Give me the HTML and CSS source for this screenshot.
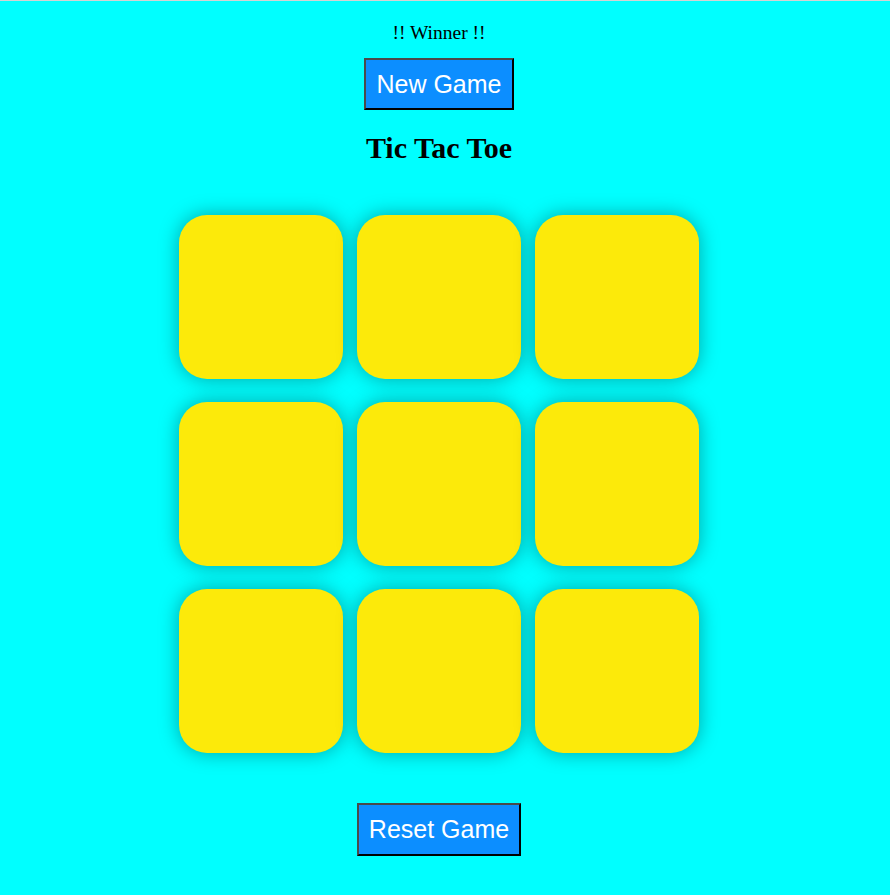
FILE: index.html
```html
<!DOCTYPE html>
<html lang="en">
<head>
<meta charset="utf-8">
<title>Tic Tac Toe</title>
<link rel="stylesheet" href="styles.css">
</head>
<body>
<main class="page">
  <div class="msg-container">
    <p class="msg">!! Winner !!</p>
    <button class="btn new-btn">New Game</button>
  </div>
  <h1 class="title">Tic Tac Toe</h1>
  <div class="board">
    <button class="box"></button>
    <button class="box"></button>
    <button class="box"></button>
    <button class="box"></button>
    <button class="box"></button>
    <button class="box"></button>
    <button class="box"></button>
    <button class="box"></button>
    <button class="box"></button>
  </div>
  <button class="btn reset-btn">Reset Game</button>
</main>
</body>
</html>
```

FILE: styles.css
```css
html, body {
  margin: 0;
  padding: 0;
}

body {
  background: #00ffff;
  border-top: 1px solid #d4d4d4;
  font-family: "Liberation Serif", "Times New Roman", serif;
  min-height: 894px;
}

.page {
  width: 878px;
  display: flex;
  flex-direction: column;
  align-items: center;
}

.msg-container {
  display: flex;
  flex-direction: column;
  align-items: center;
  padding-top: 21px;
}

.msg {
  margin: 0;
  font-size: 19.5px;
  line-height: 22px;
  color: #000;
}

.btn {
  font-family: "Liberation Sans", Arial, sans-serif;
  font-size: 25px;
  line-height: 28px;
  padding: 10px 10.5px;
  color: #fff;
  background: #0c8eff;
  border: 2px solid;
  border-color: #4a4a4a #000 #000 #4a4a4a;
  cursor: pointer;
}

.new-btn {
  margin-top: 14px;
}

.title {
  margin: 20px 0 0;
  font-size: 30px;
  line-height: 35px;
  font-weight: bold;
  color: #000;
}

.board {
  margin-top: 50px;
  display: grid;
  grid-template-columns: repeat(3, 164px);
  grid-auto-rows: 164px;
  column-gap: 14px;
  row-gap: 23px;
}

.box {
  width: 164px;
  height: 164px;
  border: none;
  border-radius: 28px;
  background: #fcea0a;
  box-shadow: 0 0 20px rgba(0, 0, 0, 0.35);
  padding: 0;
}

.reset-btn {
  margin-top: 50px;
  padding: 10px 9.5px 11px;
}
```
